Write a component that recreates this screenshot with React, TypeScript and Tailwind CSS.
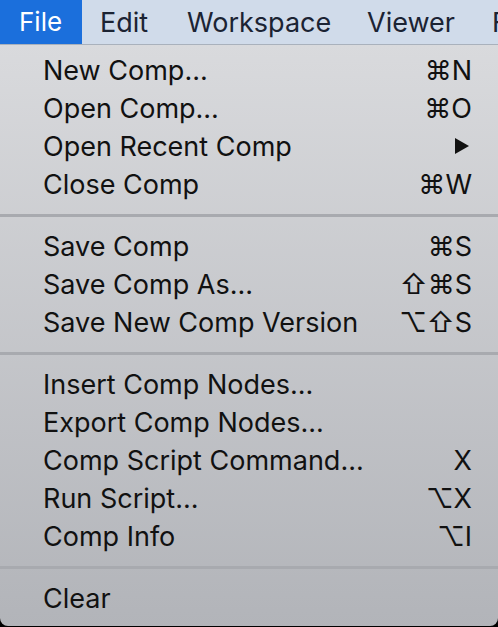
import React from 'react';

type Item = { label: string; keys?: string; arrow?: boolean };

const groups: Item[][] = [
  [
    { label: 'New Comp...', keys: '⌘N' },
    { label: 'Open Comp...', keys: '⌘O' },
    { label: 'Open Recent Comp', arrow: true },
    { label: 'Close Comp', keys: '⌘W' },
  ],
  [
    { label: 'Save Comp', keys: '⌘S' },
    { label: 'Save Comp As...', keys: '⇧⌘S' },
    { label: 'Save New Comp Version', keys: '⌥⇧S' },
  ],
  [
    { label: 'Insert Comp Nodes...' },
    { label: 'Export Comp Nodes...' },
    { label: 'Comp Script Command...', keys: 'X' },
    { label: 'Run Script...', keys: '⌥X' },
    { label: 'Comp Info', keys: '⌥I' },
  ],
  [{ label: 'Clear' }],
];

const MenuRow: React.FC<{ item: Item }> = ({ item }) => (
  <div className="flex h-[38px] items-center justify-between pl-[43px] pr-[26px]">
    <span>{item.label}</span>
    {item.arrow ? (
      <svg width="16" height="18" viewBox="0 0 16 18" className="mr-[2px]">
        <path d="M1 1 L15 9 L1 17 Z" fill="#111" />
      </svg>
    ) : (
      <span>{item.keys}</span>
    )}
  </div>
);

export default function App() {
  return (
    <div className="h-[627px] w-[498px] overflow-hidden bg-black font-['Inter','DejaVu_Sans',sans-serif] text-[27px] leading-none">
      {/* menu bar */}
      <div className="flex h-[45px] items-stretch overflow-hidden whitespace-nowrap border-b border-[#a9b1bc] bg-[#d0dbea] text-[#1b2333]">
        <div className="flex w-[82px] shrink-0 items-center bg-[#1b6fdc] pl-[19px] text-[26px] text-white">File</div>
        <div className="flex w-[86px] shrink-0 items-center pl-[18px]">Edit</div>
        <div className="flex w-[180px] shrink-0 items-center pl-[19px]">Workspace</div>
        <div className="flex w-[125px] shrink-0 items-center pl-[19px]">Viewer</div>
        <div className="flex shrink-0 items-center pl-[19px]">F</div>
      </div>

      {/* dropdown */}
      <div className="h-[581px] rounded-b-[8px] bg-gradient-to-b from-[#d9dadd] to-[#b2b4b9] pt-[6px] text-[#111]">
        {groups.map((g, gi) => (
          <div key={gi}>
            {gi > 0 && (
              <div className="flex h-[24px] items-center">
                <div className="h-[3px] w-full bg-[#a8aaaf]" />
              </div>
            )}
            {g.map((item) => (
              <MenuRow key={item.label} item={item} />
            ))}
          </div>
        ))}
      </div>
    </div>
  );
}
